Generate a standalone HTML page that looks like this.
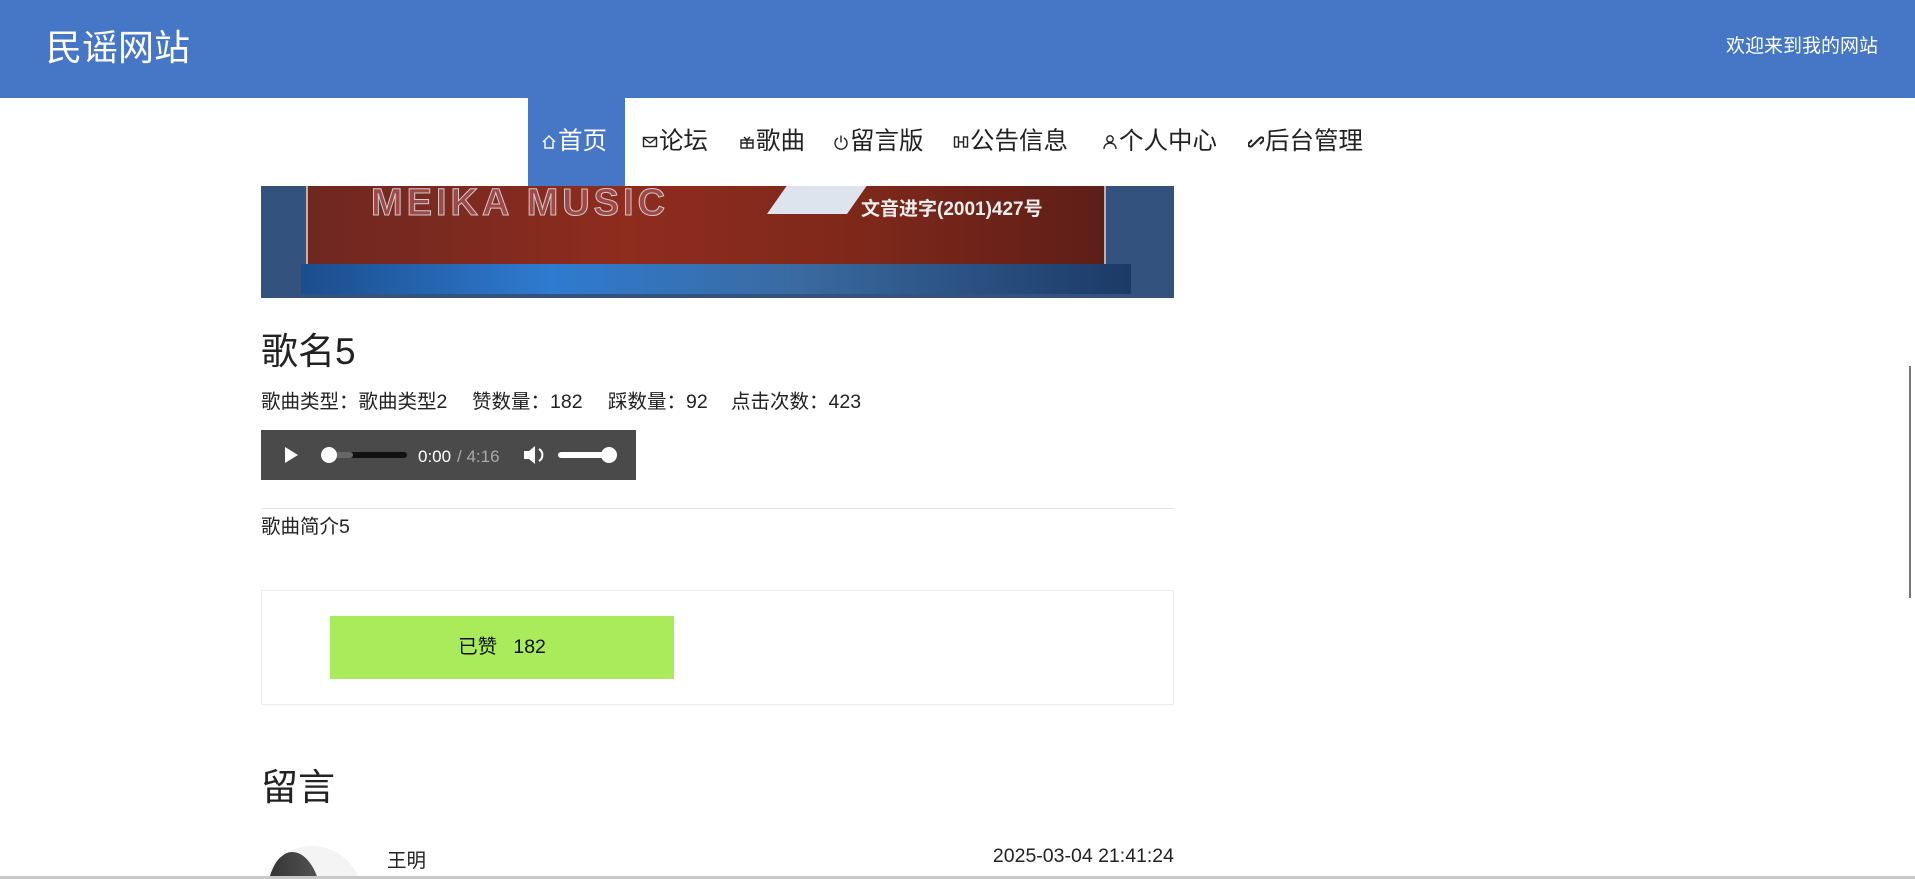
<!DOCTYPE html>
<html><head><meta charset="utf-8">
<style>
*{margin:0;padding:0;box-sizing:border-box}
html,body{width:1915px;height:879px;overflow:hidden}
body{background:#fff;font-family:"Liberation Sans","Noto Sans CJK SC",sans-serif;color:#222;position:relative}
.hd{position:absolute;left:0;top:0;width:1915px;height:98px;background:#4677c6;color:#fff}
.hd .t{position:absolute;left:46px;top:26px;font-size:36px;line-height:44px}
.hd .r{position:absolute;right:37px;top:35px;font-size:19px;line-height:24px}
.nav{position:absolute;top:98px;height:88px;left:0;width:1915px}
.nav a{position:absolute;top:0;height:88px;line-height:88px;font-size:24.5px;color:#222;text-decoration:none;white-space:nowrap}
.nav a.on{background:#4677c6;color:#fff;padding-left:13px;width:97px}
.nav svg{width:16px;height:16px;vertical-align:-1px;margin-right:1px}
.img{position:absolute;left:261px;top:186px;width:913px;height:112px;background:#34527e;overflow:hidden}
.img .red{position:absolute;left:45px;top:-10px;width:800px;height:92px;background:linear-gradient(90deg,#6e2820,#8e2c1e 40%,#7e281a 70%,#5e1e18);border:2px solid #b9b3b0;border-top:none}
.img .blue{position:absolute;left:40px;top:78px;width:830px;height:30px;background:linear-gradient(90deg,#1b4d8d,#2f7bd0 30%,#3a6aa0 60%,#1c3a66)}
.img .m{position:absolute;left:110px;top:-4px;font-size:38px;color:#a04848;letter-spacing:4px;font-weight:bold;-webkit-text-stroke:1px #ccc}
.img .w{position:absolute;left:520px;top:-12px;width:80px;height:40px;background:#dde4ee;transform:skewX(-35deg)}
.img .c{position:absolute;left:600px;top:8px;font-size:19px;color:#eee;font-weight:bold}
h1{position:absolute;left:261px;top:330px;font-size:37px;font-weight:normal;line-height:44px}
.info span{position:absolute;top:390px;font-size:19.5px;line-height:24px;white-space:nowrap}
.audio{position:absolute;left:261px;top:430px;width:375px;height:50px;background:#4a4a4a;color:#fff}
.hr{position:absolute;left:261px;top:508px;width:913px;height:1px;background:#e4e4e4}
.intro{position:absolute;left:261px;top:514px;font-size:19.5px;line-height:26px}
.box{position:absolute;left:261px;top:590px;width:913px;height:115px;border:1px solid #eee}
.btn{position:absolute;left:330px;top:616px;width:344px;height:63px;background:#a9eb5a;font-size:19.5px;line-height:63px;text-align:center;color:#111;white-space:pre}
h2{position:absolute;left:261px;top:766px;font-size:37px;font-weight:normal;line-height:44px}
.name{position:absolute;left:387px;top:850px;font-size:19.5px;line-height:22px}
.date{position:absolute;right:741px;top:845px;font-size:19.5px;line-height:22px}
.avw{position:absolute;left:262px;top:846px;width:100px;height:30px;overflow:hidden}
.av{width:100px;height:100px;border-radius:50%;background:#f4f4f4;position:relative;overflow:hidden}
.av:before{content:"";position:absolute;left:5px;top:6px;width:55px;height:100px;border-radius:50% 60% 0 0;background:linear-gradient(90deg,#333,#555)}
.bot{position:absolute;left:0;top:876px;width:1915px;height:3px;background:#c8c8c8}
.sb{position:absolute;left:1909px;top:366px;width:2px;height:232px;background:#777}
</style></head><body>
<div class="hd"><div class="t">民谣网站</div><div class="r">欢迎来到我的网站</div></div>
<div class="nav">
<a class="on" style="left:528px"><svg viewBox="0 0 16 16" fill="none" stroke="#fff" stroke-width="1.4"><path d="M2 8L8 2l6 6M4 7v7h8V7"/></svg>首页</a>
<a style="left:642px"><svg viewBox="0 0 16 16" fill="none" stroke="#222" stroke-width="1.4"><rect x="1.5" y="3.5" width="13" height="9"/><path d="M1.5 4l6.5 5 6.5-5"/></svg>论坛</a>
<a style="left:739px"><svg viewBox="0 0 16 16" fill="none" stroke="#222" stroke-width="1.4"><rect x="2" y="6" width="12" height="8"/><path d="M2 9h12M8 6v8M5 3l3 3 3-3"/></svg>歌曲</a>
<a style="left:833px"><svg viewBox="0 0 16 16" fill="none" stroke="#222" stroke-width="1.4"><path d="M5 4a6 6 0 1 0 6 0M8 1.5v7"/></svg>留言版</a>
<a style="left:953px"><svg viewBox="0 0 16 16" fill="none" stroke="#222" stroke-width="1.4"><rect x="1.5" y="3" width="4" height="10"/><rect x="10.5" y="3" width="4" height="10"/><path d="M5.5 8h5"/></svg>公告信息</a>
<a style="left:1102px"><svg viewBox="0 0 16 16" fill="none" stroke="#222" stroke-width="1.4"><circle cx="8" cy="5" r="3.2"/><path d="M2 15c0-4 3-6 6-6s6 2 6 6"/></svg>个人中心</a>
<a style="left:1248px"><svg viewBox="0 0 16 16" fill="none" stroke="#222" stroke-width="2"><path d="M7 9l-3 3a2 2 0 0 1-3-3l3-3M9 7l3-3a2 2 0 0 1 3 3l-3 3M6 10l4-4"/></svg>后台管理</a>
</div>
<div class="img"><div class="red"></div><div class="m">MEIKA MUSIC</div><div class="w"></div><div class="c">文音进字(2001)427号</div><div class="blue"></div></div>
<h1>歌名5</h1>
<div class="info"><span style="left:261px">歌曲类型：歌曲类型2</span><span style="left:472px">赞数量：182</span><span style="left:608px">踩数量：92</span><span style="left:731px">点击次数：423</span></div>
<div class="audio">
<svg width="375" height="50" viewBox="0 0 375 50"><path d="M24 17v16l13-8z" fill="#fff"/><rect x="62" y="22" width="84" height="6" rx="3" fill="#111"/><rect x="62" y="22" width="30" height="6" rx="3" fill="#666"/><circle cx="68" cy="25" r="8" fill="#fff"/><text x="157" y="32" font-size="17" fill="#fff" font-family="Liberation Sans">0:00</text><text x="196" y="32" font-size="17" fill="#aaa" font-family="Liberation Sans">/ 4:16</text><path d="M263 21h5l6-5v18l-6-5h-5z" fill="#fff"/><path d="M278 19a7 7 0 0 1 0 12" stroke="#fff" stroke-width="2" fill="none"/><rect x="297" y="22" width="52" height="6" rx="3" fill="#fff"/><circle cx="348" cy="25" r="8" fill="#fff"/></svg>
</div>
<div class="hr"></div>
<div class="intro">歌曲简介5</div>
<div class="box"></div>
<div class="btn">已赞   182</div>
<h2>留言</h2>
<div class="avw"><div class="av"></div></div>
<div class="name">王明</div>
<div class="date">2025-03-04 21:41:24</div>
<div class="sb"></div>
<div class="bot"></div>
</body></html>
